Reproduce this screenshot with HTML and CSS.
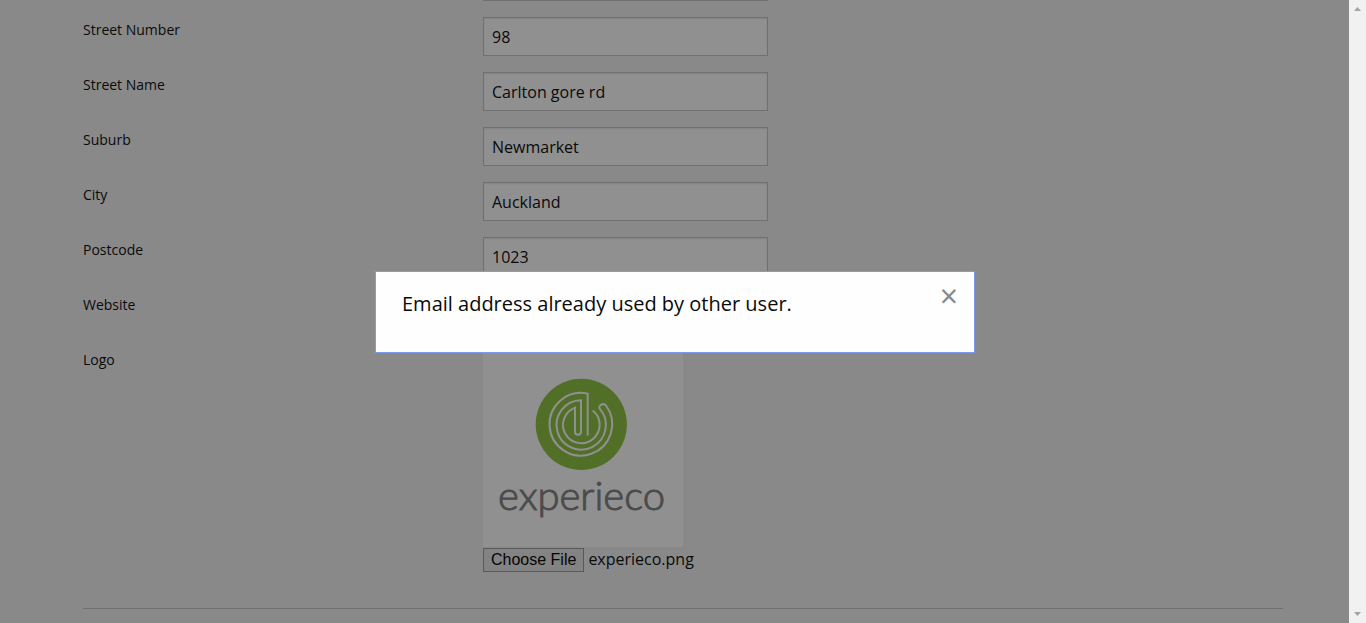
FILE: index.html
```html
<!DOCTYPE html>
<html lang="en">
<head>
<meta charset="utf-8">
<meta name="viewport" content="width=device-width, initial-scale=1">
<title>Edit profile</title>
<link rel="stylesheet" href="styles.css">
</head>
<body>
<main class="page">
  <form class="form">
    <div class="row row-first"><span></span><input class="field" type="text" aria-label="Unit"></div>
    <div class="row"><label for="number">Street Number</label><input class="field" id="number" type="text" value="98"></div>
    <div class="row"><label for="street">Street Name</label><input class="field" id="street" type="text" value="Carlton gore rd"></div>
    <div class="row"><label for="suburb">Suburb</label><input class="field" id="suburb" type="text" value="Newmarket"></div>
    <div class="row"><label for="city">City</label><input class="field" id="city" type="text" value="Auckland"></div>
    <div class="row"><label for="postcode">Postcode</label><input class="field" id="postcode" type="text" value="1023"></div>
    <div class="row"><label for="website">Website</label><input class="field" id="website" type="text"></div>
    <div class="row row-logo">
      <label for="logo">Logo</label>
      <div class="upload">
        <svg class="logo" viewBox="0 0 200 200" role="img" aria-label="experieco">
          <rect class="logo-back" width="200" height="200"/>
          <circle class="logo-disc" cx="98.300" cy="77.400" r="45.600"/>
          <g transform="translate(47 25.300) scale(.3333)">
            <path class="logo-line" d="M173 187V64A94 94 0 1 0 229 101C221 90 204 98 209 109A74 74 0 1 1 153 84V178C153 190 135 190 135 178V106A55 55 0 1 0 190 116"/>
          </g>
          <text class="logo-name" x="15" y="163">experieco</text>
        </svg>
        <div class="file">
          <input class="file-input" id="logo" type="file" tabindex="-1">
          <button class="file-button" type="button">Choose File</button>
          <span>experieco.png</span>
        </div>
      </div>
    </div>
    <hr class="rule">
  </form>
</main>
<div class="overlay">
  <div class="modal" role="dialog" aria-modal="true" aria-labelledby="message">
    <p class="message" id="message">Email address already used by other user.</p>
    <button class="close" type="button" aria-label="Close">×</button>
  </div>
</div>
<div class="scrollbar" aria-hidden="true">
  <svg class="arrow" viewBox="0 0 17 17"><path d="M5 11L8.500 7L12 11Z"/></svg>
  <svg class="arrow" viewBox="0 0 17 17"><path d="M5 6L8.500 10L12 6Z"/></svg>
</div>
</body>
</html>
```
FILE: styles.css
```css
*, *::before, *::after { box-sizing: border-box; }

body {
  margin: 0;
  height: 100vh;
  overflow: hidden;
  background: #f1f1f1;
  color: #0a0a0a;
  font-family: "Open Sans", sans-serif;
  font-size: 16px;
  line-height: 24px;
}

.page {
  max-width: 1200px;
  margin: 0 auto;
}

.row {
  display: grid;
  grid-template-columns: 1fr 2fr;
  align-items: start;
  margin-bottom: 16px;
}

.row-first { margin-top: -38px; }

.row label {
  font-size: 14px;
  line-height: 25px;
}

.field {
  width: 285px;
  height: 39px;
  padding: 8px;
  border: 1px solid #c4c4c4;
  border-radius: 0;
  background: #fefefe;
  box-shadow: inset 0 1px 2px rgba(10, 10, 10, .1);
  color: inherit;
  font: inherit;
}

.row-logo { margin-bottom: 36px; }

.logo {
  display: block;
  width: 200px;
  height: 200px;
}

.logo-back { fill: #fefefe; }
.logo-disc { fill: #8cc13f; }

.logo-line {
  fill: none;
  stroke: #fefefe;
  stroke-width: 6;
  stroke-linecap: round;
}

.logo-name {
  fill: #808080;
  stroke: #808080;
  stroke-width: 1;
  font-family: Lato, sans-serif;
  font-size: 40px;
  font-weight: 300;
}

.file {
  position: relative;
  display: flex;
  align-items: flex-start;
  gap: 4px;
}

.file-input {
  position: absolute;
  width: 1px;
  height: 1px;
  opacity: 0;
}

.file-button {
  height: 24px;
  margin-top: 1px;
  padding: 0 7px;
  border: 1px solid #999;
  border-radius: 0;
  background: #e6e6e6;
  color: #000;
  font: 16px "Liberation Sans", sans-serif;
}

.rule {
  margin: 0;
  border: 0;
  border-top: 1px solid #c4c4c4;
}

.overlay {
  position: fixed;
  inset: 0 17px 0 0;
  display: grid;
  place-items: center;
  padding: 1px 0 0 1px;
  background: rgba(10, 10, 10, .45);
}

.modal {
  display: flex;
  justify-content: space-between;
  align-items: flex-start;
  width: 600px;
  max-width: 100%;
  padding: 16px 16px 16px 26px;
  border: 1px solid #7b9bee;
  background: #fefefe;
}

.message {
  margin: 0 0 16px;
  font-size: 20px;
  line-height: 32px;
}

.close {
  padding: 0;
  border: 0;
  background: none;
  color: #8a8a8a;
  font: 32px/16px "Open Sans", sans-serif;
}

.scrollbar {
  position: fixed;
  inset: 0 0 0 auto;
  display: flex;
  flex-direction: column;
  justify-content: space-between;
  width: 17px;
  background: #f1f1f1;
}

.arrow {
  width: 17px;
  height: 17px;
  fill: #a3a3a3;
}
```
